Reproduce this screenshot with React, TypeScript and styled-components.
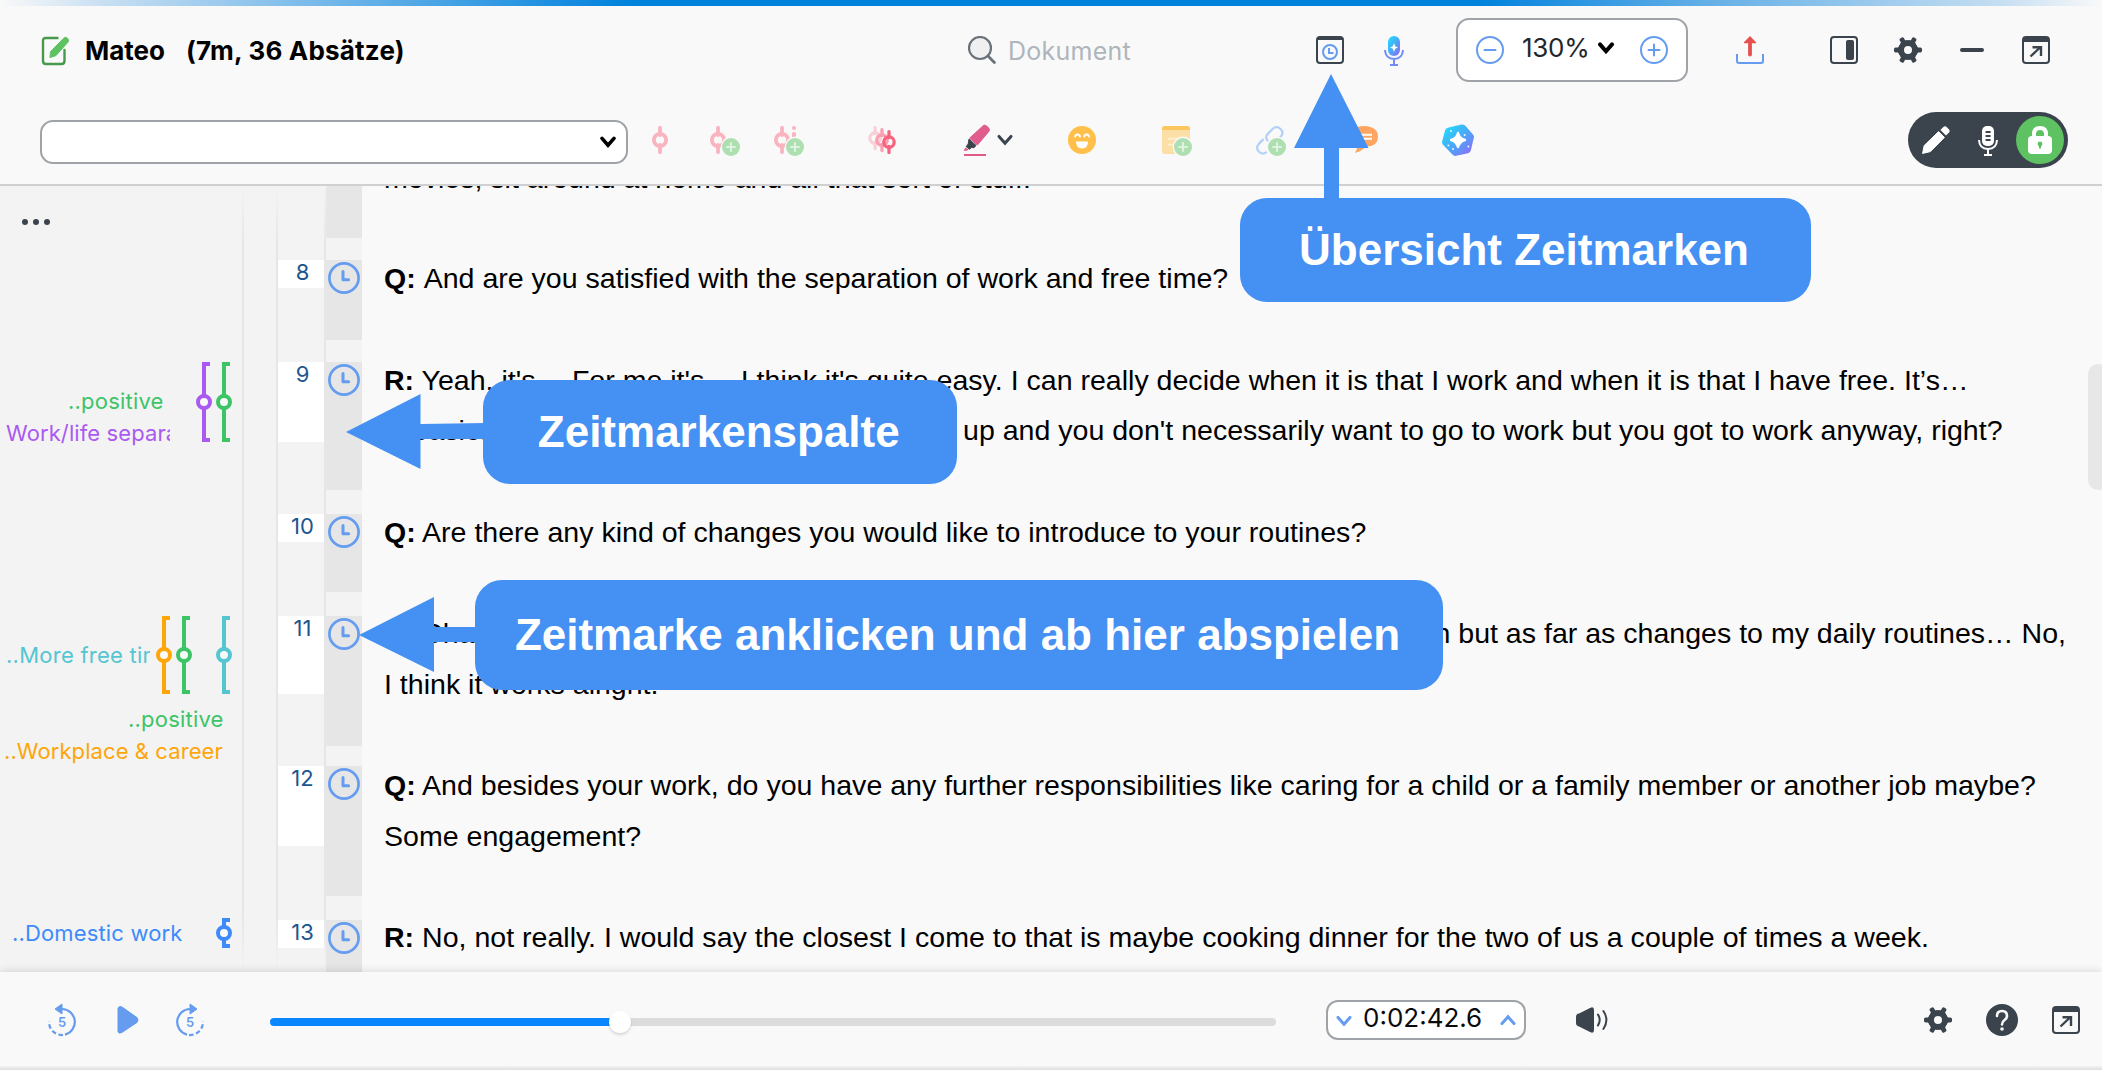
import React from 'react';
import styled, { createGlobalStyle } from 'styled-components';

const C = {
  bg: '#f9f9f9',
  side: '#f3f3f3',
  line: '#e6e6e6',
  dark: '#3b444d',
  blue: '#659cf0',
  callout: '#4490f3',
  green: '#5ec262',
};

const Global = createGlobalStyle`
  * { box-sizing: border-box; }
  body { margin: 0; background: ${C.bg}; }
`;

const UI = `Inter, "Liberation Sans", sans-serif`;
const DOC = `"Liberation Sans", Arial, sans-serif`;

const Window = styled.div`
  position: relative;
  width: 2102px;
  height: 1070px;
  overflow: hidden;
  display: flex;
  flex-direction: column;
  background: ${C.bg};
  font-family: ${UI};
`;

const AccentStrip = styled.div`
  height: 6px;
  flex: none;
  background: linear-gradient(90deg, #f9f9f9 0, #c5def2 110px, #0082dd 630px, #0082dd 1480px, #62aee6 1700px, #c5def2 2000px, #f9f9f9 2102px);
`;

const TitleBar = styled.header`
  height: 88px;
  flex: none;
  display: flex;
  align-items: center;
`;

const ToolBar = styled.div`
  height: 92px;
  flex: none;
  display: flex;
  align-items: center;
  padding-top: 2px;
  border-bottom: 2px solid #d0d0d0;
`;

const Slot = styled.span<{ $ml?: number; $pt?: number; $pb?: number }>`
  display: flex;
  flex: none;
  margin-left: ${(p) => p.$ml ?? 0}px;
  padding-top: ${(p) => p.$pt ?? 0}px;
  padding-bottom: ${(p) => p.$pb ?? 0}px;
`;

const Title = styled.h1<{ $ml: number; $ls: number }>`
  margin: 0 0 0 ${(p) => p.$ml}px;
  font-size: 26px;
  line-height: 30px;
  font-weight: 700;
  letter-spacing: ${(p) => p.$ls}px;
  color: #000;
  white-space: nowrap;
`;

const TitleGroup = styled.div`
  display: flex;
  align-items: center;
  width: 968px;
  padding: 2px 0 0 41px;
  flex: none;
`;

const SearchHint = styled.span`
  width: 308px;
  margin-left: 12px;
  padding-top: 2px;
  font-size: 25px;
  line-height: 30px;
  letter-spacing: 0.25px;
  color: #aeb5bb;
`;

const Field = styled.div<{ $w: number; $h: number; $ml: number; $r?: number; $mt?: number }>`
  width: ${(p) => p.$w}px;
  height: ${(p) => p.$h}px;
  margin-left: ${(p) => p.$ml}px;
  margin-top: ${(p) => p.$mt ?? 0}px;
  flex: none;
  display: flex;
  align-items: center;
  background: #fff;
  border: 2px solid #9fa3a8;
  border-radius: ${(p) => p.$r ?? 13}px;
`;

const FieldText = styled.span<{ $ml: number; $w: number; $color?: string; $ls?: number }>`
  width: ${(p) => p.$w}px;
  margin-left: ${(p) => p.$ml}px;
  padding-bottom: 4px;
  font-size: 26px;
  line-height: 30px;
  letter-spacing: ${(p) => p.$ls ?? 0}px;
  color: ${(p) => p.$color ?? '#22272c'};
  white-space: nowrap;
`;

const ModePill = styled.div`
  margin-left: 434px;
  width: 160px;
  height: 56px;
  border-radius: 28px;
  background: ${C.dark};
  display: flex;
  align-items: center;
  padding-left: 14px;
`;

const ModeActive = styled.span`
  margin-left: 18px;
  width: 48px;
  height: 48px;
  border-radius: 50%;
  background: ${C.green};
  display: flex;
  align-items: center;
  justify-content: center;
`;

const fade = `linear-gradient(to bottom, rgba(230,230,230,0), #e6e6e6 60px, #e6e6e6 calc(100% - 60px), rgba(230,230,230,0))`;

const Document = styled.main`
  flex: none;
  height: 786px;
  overflow: hidden;
  display: flex;
  flex-direction: column;
  background:
    ${fade} 242px 0 / 2px 100% no-repeat,
    ${fade} 276px 0 / 2px 100% no-repeat,
    ${fade} 324px 0 / 2px 100% no-repeat,
    linear-gradient(${C.side}, ${C.side}) 0 0 / 362px 100% no-repeat,
    ${C.bg};
`;

const Row = styled.section<{ $h: number }>`
  flex: none;
  height: ${(p) => p.$h}px;
  display: grid;
  grid-template-columns: 242px 36px 46px 38px 1fr;
  align-items: start;
`;

const CodeCell = styled.div`
  display: grid;
  height: 100%;
  align-items: start;
`;

const Lanes = styled.div<{ $mt: number }>`
  grid-area: 1 / 1;
  display: flex;
  justify-content: flex-end;
  padding-right: 8px;
  margin-top: ${(p) => p.$mt}px;
`;

const Labels = styled.div<{ $mt: number }>`
  grid-area: 1 / 1;
  margin-top: ${(p) => p.$mt}px;
  display: flex;
  flex-direction: column;
`;

const Label = styled.span<{ $x: number; $w: number; $c: string; $gap?: number; $ls?: number }>`
  margin: ${(p) => p.$gap ?? 0}px 0 0 ${(p) => p.$x}px;
  width: ${(p) => p.$w}px;
  overflow: hidden;
  white-space: nowrap;
  font-size: 22px;
  line-height: 32px;
  letter-spacing: ${(p) => p.$ls ?? 0.2}px;
  color: ${(p) => p.$c};
`;

const NumberCell = styled.div<{ $h: number }>`
  grid-column: 3;
  height: ${(p) => p.$h}px;
  background: ${(p) => (p.$h ? '#fff' : 'transparent')};
  padding: ${(p) => (p.$h ? 1 : 0)}px 0 0 3px;
  text-align: center;
  font-size: 22px;
  line-height: 22px;
  color: #1c568e;
`;

const TimeCell = styled.div<{ $h: number }>`
  grid-column: 4;
  height: ${(p) => p.$h}px;
  margin-left: 2px;
  background: ${C.line};
  display: flex;
  justify-content: center;
  padding-top: 2px;
`;

const Paragraph = styled.p<{ $mt: number }>`
  margin: ${(p) => p.$mt}px 0 0 22px;
  font-family: ${DOC};
  font-size: 28.55px;
  line-height: 50.5px;
  color: #000;
  white-space: nowrap;
`;

const Line = styled.span`
  display: flex;
  white-space: pre;
`;

const Lead = styled.span<{ $w: number }>`
  width: ${(p) => p.$w}px;
  flex: none;
`;

const Player = styled.footer`
  position: relative;
  flex: none;
  height: 98px;
  display: flex;
  align-items: center;
  padding-bottom: 2px;
  background: ${C.bg};
  box-shadow: 0 0 9px rgba(0, 0, 0, 0.16);
`;

const BottomEdge = styled.div`
  height: 4px;
  position: absolute;
  left: 0;
  right: 0;
  bottom: 0;
  background: linear-gradient(#f2f2f2, #dfdfdf);
`;

const Track = styled.div`
  margin: 4px 0 0 65px;
  width: 1006px;
  height: 8px;
  border-radius: 4px;
  background: #dcdcdc;
  display: flex;
  align-items: center;
`;

const Played = styled.div`
  width: 350px;
  height: 8px;
  border-radius: 4px 0 0 4px;
  background: #0a87ff;
`;

const Knob = styled.span`
  width: 22px;
  height: 22px;
  margin-left: -11px;
  border-radius: 50%;
  background: #fff;
  box-shadow: 0 2px 3px rgba(0, 0, 0, 0.14);
`;

const ScrollThumb = styled.div`
  position: absolute;
  right: -6px;
  top: 364px;
  width: 20px;
  height: 126px;
  border-radius: 10px;
  background: #e7e7e7;
`;

const Callout = styled.div<{ $x: number; $y: number; $w: number; $h: number }>`
  position: absolute;
  left: ${(p) => p.$x}px;
  top: ${(p) => p.$y}px;
  width: ${(p) => p.$w}px;
  height: ${(p) => p.$h}px;
  padding-right: 2px;
  border-radius: 27px;
  background: ${C.callout};
  color: #fff;
  display: flex;
  align-items: center;
  justify-content: center;
  font-family: ${DOC};
  font-weight: 700;
  font-size: 44px;
  line-height: 50px;
  white-space: nowrap;
`;

const Arrow = styled.svg<{ $x: number; $y: number }>`
  position: absolute;
  left: ${(p) => p.$x}px;
  top: ${(p) => p.$y}px;
  fill: ${C.callout};
`;

const Defs = styled.svg`
  position: absolute;
`;

type IconProps = { w?: number; h?: number; ml?: number; pt?: number; children: React.ReactNode };
const Icon = ({ w = 28, h = 28, ml, pt, children }: IconProps) => (
  <Slot $ml={ml} $pt={pt}>
    <svg width={w} height={h} viewBox={`0 0 ${w} ${h}`} fill="none">
      {children}
    </svg>
  </Slot>
);

const Gear = ({ ml }: { ml: number }) => (
  <Icon ml={ml}>
    {[0, 60, 120, 180, 240, 300].map((a) => (
      <path key={a} transform={`rotate(${a} 14 14)`} d="M21 7.6L24 11.6H26.4Q28 11.8 28 13V15Q28 16.2 26.4 16.4H24L21 20.4Z" fill={C.dark} />
    ))}
    <circle cx="14" cy="14" r="6.9" stroke={C.dark} strokeWidth="5.8" />
  </Icon>
);

const PopOut = ({ ml }: { ml: number }) => (
  <Icon ml={ml}>
    <rect x="1" y="1" width="26" height="26" rx="3" stroke={C.dark} strokeWidth="2" />
    <path d="M1 6V3a2 2 0 0 1 2-2h22a2 2 0 0 1 2 2v3z" fill={C.dark} />
    <path d="M8.5 20.5L18 11.5M10.5 11.2H19V20" stroke={C.dark} strokeWidth="2.4" />
  </Icon>
);

const Clock = () => (
  <svg width="32" height="32" viewBox="0 0 32 32" fill="none" stroke={C.blue}>
    <circle cx="16" cy="16" r="14.6" strokeWidth="2.7" />
    <path d="M15 9.5V17.7H20.6" strokeWidth="3" strokeLinecap="round" strokeLinejoin="round" />
  </svg>
);

const Plus = () => (
  <g>
    <circle cx="21" cy="21" r="10.4" fill={C.bg} />
    <circle cx="21" cy="21" r="9" fill="#aedfb1" />
    <path d="M21 16.3v9.4M16.3 21h9.4" stroke="#dff3e0" strokeWidth="2" />
  </g>
);

const CodeMark = ({ x = 8, y = 0, c = '#f9b4c0' }) => (
  <g transform={`translate(${x} ${y})`} stroke={c}>
    <path d="M0 1.8V9M0 19V26.2" strokeWidth="3.8" strokeLinecap="round" />
    <circle cx="0" cy="14" r="6.1" strokeWidth="3.8" />
  </g>
);

const Chevron = ({ ml, c = '#000', up = false, s = 3.4 }: { ml: number; c?: string; up?: boolean; s?: number }) => (
  <Icon w={18} h={12} ml={ml}>
    <path d={up ? 'M3 9.6L9 2.8L15 9.6' : 'M3 2.4L9 9.2L15 2.4'} stroke={c} strokeWidth={s} strokeLinecap="round" />
  </Icon>
);

const Bracket = ({ c, h }: { c: string; h: number }) => (
  <svg width="20" height={h} viewBox={`0 0 20 ${h}`} fill="none" stroke={c} strokeWidth="4">
    <path d={`M16 2H10V${h / 2 - 6}M10 ${h / 2 + 6}V${h - 2}H16`} />
    <circle cx="10" cy={h / 2} r="6" fill={C.bg} />
  </svg>
);

type LabelData = { t: string; x: number; w: number; c: string; gap?: number; ls?: number };
type RowData = {
  n?: number;
  h: number;
  num: number;
  time: number;
  mt: number;
  lines: { who?: string; text: string; lead?: number; leadText?: string }[];
  lanes?: (string | undefined)[];
  laneH?: number;
  laneMt?: number;
  labels?: LabelData[];
  labelMt?: number;
};

const PURPLE = '#aa5af0';
const GREEN = '#3dc466';
const ORANGE = '#fea50a';
const TEAL = '#55c5d1';
const BLUE = '#3d8bfa';

const rows: RowData[] = [
  { h: 74, num: 0, time: 52, mt: -33, lines: [{ text: 'movies, sit around at home and all that sort of stuff.' }] },
  { n: 8, h: 102, num: 28, time: 80, mt: -7, lines: [{ who: 'Q: ', text: 'And are you satisfied with the separation of work and free time?' }] },
  {
    n: 9, h: 152, num: 80, time: 128, mt: -7.5,
    lines: [
      { who: 'R:', text: " Yeah, it's… For me it's… I think it's quite easy. I can really decide when it is that I work and when it is that I have free. It’s…" },
      { lead: 579, leadText: 'is easier than when you have to get', text: "up and you don't necessarily want to go to work but you got to work anyway, right?" },
    ],
    lanes: [PURPLE, GREEN], laneH: 80, laneMt: 0,
    labels: [
      { t: '..positive', x: 68, w: 100, c: GREEN },
      { t: 'Work/life separation', x: 6, w: 164, c: PURPLE, ls: 0.1 },
    ],
    labelMt: 23,
  },
  { n: 10, h: 102, num: 28, time: 78, mt: -7, lines: [{ who: 'Q:', text: ' Are there any kind of changes you would like to introduce to your routines?' }] },
  {
    n: 11, h: 150, num: 78, time: 130, mt: -8,
    lines: [
      { lead: 960, who: 'R:', leadText: ' Changes… I could use a little more vacation', text: 'situation but as far as changes to my daily routines… No,' },
      { text: 'I think it works alright.' },
    ],
    lanes: [ORANGE, GREEN, undefined, TEAL], laneH: 78, laneMt: 0,
    labels: [
      { t: '..More free time', x: 6, w: 144, c: TEAL, ls: 0.25 },
      { t: '..positive', x: 128, w: 100, c: GREEN, gap: 32 },
      { t: '..Workplace & career', x: 4, w: 230, c: ORANGE, ls: 0.08 },
    ],
    labelMt: 23,
  },
  {
    n: 12, h: 154, num: 80, time: 130, mt: -6,
    lines: [
      { who: 'Q:', text: ' And besides your work, do you have any further responsibilities like caring for a child or a family member or another job maybe?' },
      { text: 'Some engagement?' },
    ],
  },
  {
    n: 13, h: 80, num: 28, time: 80, mt: -8,
    lines: [{ who: 'R:', text: ' No, not really. I would say the closest I come to that is maybe cooking dinner for the two of us a couple of times a week.' }],
    lanes: [BLUE], laneH: 30, laneMt: -2,
    labels: [{ t: '..Domestic work', x: 12, w: 190, c: BLUE, ls: 0.15 }],
    labelMt: -3,
  },
];

const MenuSlot = styled.span`
  display: flex;
  padding: 33px 0 0 22px;
`;

const ParagraphRow = ({ r }: { r: RowData }) => (
  <Row $h={r.h}>
    <CodeCell>
      {!r.n && (
        <MenuSlot>
          <svg width="28" height="6" fill={C.dark}>
            <circle cx="3" cy="3" r="3" /><circle cx="14" cy="3" r="3" /><circle cx="25" cy="3" r="3" />
          </svg>
        </MenuSlot>
      )}
      {r.lanes && (
        <Lanes $mt={r.laneMt ?? 0}>
          {r.lanes.map((c, i) => (c ? <Bracket key={i} c={c} h={r.laneH!} /> : <svg key={i} width="20" height="10" />))}
        </Lanes>
      )}
      {r.labels && (
        <Labels $mt={r.labelMt ?? 0}>
          {r.labels.map((l) => (
            <Label key={l.t} $x={l.x} $w={l.w} $c={l.c} $gap={l.gap} $ls={l.ls}>{l.t}</Label>
          ))}
        </Labels>
      )}
    </CodeCell>
    <NumberCell $h={r.num}>{r.n}</NumberCell>
    <TimeCell $h={r.time}>{r.n && <Clock />}</TimeCell>
    <Paragraph $mt={r.mt}>
      {r.lines.map((l, i) => (
        <Line key={i}>
          {l.lead ? (
            <Lead $w={l.lead}>{l.who && <b>{l.who}</b>}{l.leadText}</Lead>
          ) : (
            l.who && <b>{l.who}</b>
          )}
          {l.text}
        </Line>
      ))}
    </Paragraph>
  </Row>
);

const Skip = ({ ml, forward = false }: { ml: number; forward?: boolean }) => (
  <Icon w={30} h={34} ml={ml}>
    <g transform={forward ? 'translate(30 0) scale(-1 1)' : undefined}>
      <path d="M15 6A13 13 0 0 1 18 31.6" stroke={C.blue} strokeWidth="2.2" />
      <path d="M16 32A13 13 0 0 1 2 18.5" stroke={C.blue} strokeWidth="2.2" strokeDasharray="4.6 2.6" />
      <path d="M15 1V11L8 6Z" fill={C.blue} stroke={C.blue} strokeLinejoin="round" />
    </g>
    <text x="15" y="23.5" textAnchor="middle" fontFamily="Inter" fontWeight="600" fontSize="13" fill={C.blue}>5</text>
  </Icon>
);

export default function App() {
  return (
    <Window>
      <Global />
      <Defs width="0" height="0">
        <defs>
          <linearGradient id="ai" x1="0" y1="0" x2="1" y2="1">
            <stop offset="0.1" stopColor="#22d8fb" />
            <stop offset="0.55" stopColor="#4fa3f8" />
            <stop offset="1" stopColor="#9a63fb" />
          </linearGradient>
        </defs>
      </Defs>
      <AccentStrip />
      <TitleBar>
        <TitleGroup>
          <Icon w={29} h={30}>
            <path d="M16.5 2H5Q2 2 2 5V25Q2 28 5 28H20.5Q23.5 28 23.5 25V14" stroke="#47994e" strokeWidth="2.4" strokeLinecap="round" />
            <path d="M22.5 2.4Q24.3 0.4 26.4 2.2Q28.6 4.2 26.9 6.2L15 19.6L9 21.6L9.4 15.8Z" fill={C.green} stroke={C.green} strokeWidth="1" strokeLinejoin="round" />
          </Icon>
          <Title $ml={15} $ls={0}>Mateo</Title>
          <Title $ml={21} $ls={0.2}>(7m, 36 Absätze)</Title>
        </TitleGroup>
        <Icon>
          <circle cx="12" cy="12" r="11" fill="#f0f0f0" stroke="#69727b" strokeWidth="2.2" />
          <path d="M20 20L26.4 26.4" stroke="#69727b" strokeWidth="2.8" strokeLinecap="round" />
        </Icon>
        <SearchHint>Dokument</SearchHint>
        <Icon>
          <rect x="1" y="1" width="26" height="26" rx="3" stroke={C.dark} strokeWidth="2" />
          <path d="M1 4V3a2 2 0 0 1 2-2h22a2 2 0 0 1 2 2v1z" fill={C.dark} />
          <circle cx="14" cy="16" r="7" stroke={C.blue} strokeWidth="2" />
          <path d="M13 12V17H17.5" stroke={C.blue} strokeWidth="2" />
        </Icon>
        <Icon w={20} h={32} ml={40}>
          <rect x="4" y="2" width="12" height="20" rx="6" fill="url(#ai)" />
          <path d="M1 16Q1.6 25 10 25T19 16M10 25V31M6 31H14" stroke="#6f8cf8" strokeWidth="2" />
          <path d="M10 9L11.2 12.3L14 13.5L11.2 14.7L10 18L8.8 14.7L6 13.5L8.8 12.3Z" fill="#fff" />
        </Icon>
        <Field $w={232} $h={64} $ml={52}>
          <Icon ml={18}>
            <circle cx="14" cy="14" r="13" stroke={C.blue} strokeWidth="2" />
            <path d="M8.5 14H19.5" stroke={C.blue} strokeWidth="2" strokeLinecap="round" />
          </Icon>
          <FieldText $ml={18} $w={68} $ls={-0.3}>130%</FieldText>
          <Slot $ml={7} $pb={4}><Chevron ml={0} s={4} /></Slot>
          <Icon ml={25}>
            <circle cx="14" cy="14" r="13" stroke={C.blue} strokeWidth="2" />
            <path d="M8.5 14H19.5M14 8.5V19.5" stroke={C.blue} strokeWidth="2" strokeLinecap="round" />
          </Icon>
        </Field>
        <Icon ml={48}>
          <path d="M1 18V25Q1 27 3 27H25Q27 27 27 25V18" stroke={C.blue} strokeWidth="2" />
          <path d="M14 7V18.5" stroke="#e4524f" strokeWidth="3.8" strokeLinecap="round" />
          <path d="M14 0.8L19.6 6.6H8.4Z" fill="#e4524f" stroke="#e4524f" strokeWidth="1.2" strokeLinejoin="round" />
        </Icon>
        <Icon ml={66}>
          <rect x="1" y="1" width="26" height="26" rx="3" stroke={C.dark} strokeWidth="2" />
          <rect x="16" y="4" width="8" height="20" rx="2" fill={C.dark} />
        </Icon>
        <Gear ml={36} />
        <Icon w={24} h={4} ml={38}><rect width="24" height="4" rx="2" fill={C.dark} /></Icon>
        <PopOut ml={38} />
      </TitleBar>

      <ToolBar>
        <Field $w={588} $h={44} $ml={40} $mt={4}>
          <Chevron ml={557} s={3.6} />
        </Field>
        <Icon w={16} ml={24}><CodeMark /></Icon>
        <Icon w={30} h={30} ml={42} pt={2}><CodeMark /><Plus /></Icon>
        <Icon w={30} h={30} ml={34} pt={2}>
          <CodeMark />
          <path d="M20 2V2.1M20 8V12" stroke="#f9b4c0" strokeWidth="4" strokeLinecap="round" />
          <Plus />
        </Icon>
        <Icon ml={64}>
          <g transform="translate(0.2 0) scale(0.86)"><CodeMark x={8} c="#f9d0d8" /></g>
          <g transform="translate(7.1 2) scale(0.86)"><CodeMark x={8} c="#f99fb0" /></g>
          <g transform="translate(14.1 4) scale(0.86)"><CodeMark x={8} c="#f7647f" /></g>
        </Icon>
        <Icon w={28} h={32} ml={67}>
          <path d="M19.6 2.2Q21.4 0.2 23.4 1.9L25.4 3.6Q27.4 5.4 25.9 7.4L14.4 21L6.6 14.2Z" fill="#e05c8c" stroke="#e05c8c" strokeLinejoin="round" />
          <path d="M6 15L13 21.4L11.2 23.6H8.4L6.4 25.2L3.2 22.6L5.2 20Z" fill={C.dark} stroke={C.dark} strokeLinejoin="round" />
          <path d="M2.4 23.4L5.6 25.6L4 26.8H0.6Z" fill="#e05c8c" />
          <path d="M1 31H23" stroke="#e05c8c" strokeWidth="2" />
        </Icon>
        <Chevron ml={5} c={C.dark} s={3} />
        <Icon ml={54}>
          <circle cx="14" cy="14" r="14" fill="#fec04a" />
          <path d="M7.2 10.6Q7.6 8.6 9.6 8.6T12 10.6M16.2 10.6Q16.6 8.6 18.6 8.6T21 10.6" stroke="#fff" strokeWidth="2" strokeLinecap="round" />
          <path d="M8 15.6H20Q20 22.4 14 22.4T8 15.6Z" fill="#fff" />
        </Icon>
        <Icon w={30} h={30} ml={66} pt={2}>
          <rect width="28" height="28" rx="3" fill="#fbdfa6" />
          <path d="M0 4V3A3 3 0 0 1 3 0H25A3 3 0 0 1 28 3V4Z" fill="#f9c75e" />
          <path d="M6 12.8H22M6 18.8H14" stroke="#fdeecf" strokeWidth="2" />
          <Plus />
        </Icon>
        <Icon w={30} h={30} ml={64} pt={2}>
          <g stroke="#b2d0fa" strokeWidth="2.2" strokeLinecap="round">
            <path d="M11.5 14.5Q8.6 11 12 7.6L16.5 3Q20.6 -0.6 24.6 3Q28.4 7 24.4 11" />
            <path d="M7 13.6L3 17.6Q-0.8 22 3 25.8Q6.4 29 10 26.4" />
          </g>
          <Plus />
        </Icon>
        <Icon ml={64}>
          <path d="M14 0Q28 0.6 28 10.6Q28 20 17 20.6Q11 25.4 5 27Q7.6 23.4 7 19.6Q0 17 0 10.6Q0 0.6 14 0Z" fill="#fea561" />
          <path d="M7 8.8H22M7 12.8H22" stroke="#fff" strokeWidth="2" />
        </Icon>
        <Icon w={32} h={32} ml={64}>
          <path d="M6.6 3.4L19.4 0.6Q22 0 23.6 2L31 10.4Q32.4 12 31.8 14L28.8 26.4Q28.2 28.6 26 29.2L14.4 31.8Q12 32.4 10.4 30.6L1.2 21Q-0.4 19.4 0.2 17L3.2 6Q4 4 6.6 3.4Z" fill="url(#ai)" />
          <path d="M16 9Q17.4 14.6 23 16Q17.4 17.4 16 23Q14.6 17.4 9 16Q14.6 14.6 16 9Z" fill="#fff" stroke="#fff" strokeWidth="2.4" strokeLinejoin="round" />
          <g fill="#e8f7ff"><circle cx="9" cy="7" r="1" /><circle cx="22.6" cy="11" r="1" /><circle cx="6.4" cy="21.6" r="1" /><circle cx="11" cy="25" r="1" /><circle cx="26.4" cy="22.4" r="1" /></g>
        </Icon>
        <ModePill>
          <Icon>
            <path d="M16.6 5.6L22.4 11.4L8.4 25.6L0.6 27.4L2.2 19.6Z" fill="#fff" stroke="#fff" strokeLinejoin="round" />
            <path d="M18.4 4L21.4 1Q23 -0.4 24.6 1L27 3.4Q28.4 5 27 6.6L24 9.6Z" fill="#fff" />
          </Icon>
          <Icon w={20} h={32} ml={28}>
            <rect x="4" y="2" width="12" height="20" rx="5" fill="#fff" />
            <path d="M7.6 8H12.6M7.6 12H12.6M7.6 16H12.6" stroke={C.dark} strokeWidth="1.8" />
            <path d="M1 16Q1.4 25 10 25T19 16M10 25V31M6 31H14" stroke="#fff" strokeWidth="2" />
          </Icon>
          <ModeActive>
            <svg width="24" height="28" fill="none">
              <path d="M6 12V8Q6 2 12 2T18 8V12" stroke="#fff" strokeWidth="4" />
              <rect y="10" width="24" height="18" rx="4" fill="#fff" />
              <circle cx="12" cy="18" r="2.4" fill={C.green} /><path d="M12 18V22.4" stroke={C.green} strokeWidth="2" />
            </svg>
          </ModeActive>
        </ModePill>
      </ToolBar>

      <Document>
        {rows.map((r, i) => <ParagraphRow key={i} r={r} />)}
      </Document>

      <Player>
        <Skip ml={47} />
        <Icon w={24} h={30} ml={39}>
          <path d="M2 3L2 27Q3 29 6 27.4L21 17.4Q23 15 21 12.6L6 2Q3 0.4 2 3Z" fill={C.blue} stroke={C.blue} strokeLinejoin="round" />
        </Icon>
        <Skip ml={35} forward />
        <Track>
          <Played />
          <Knob />
        </Track>
        <Field $w={200} $h={40} $ml={50} $r={12}>
          <Slot $pt={2}><Chevron ml={7} c={C.blue} s={3} /></Slot>
          <FieldText $ml={10} $w={130} $color="#0a0a0a">0:02:42.6</FieldText>
          <Chevron ml={6} c={C.blue} up s={3} />
        </Field>
        <Icon w={34} h={28} ml={50}>
          <path d="M0 11Q0 8 3 7.6L14 2Q18 0 18 4V24Q18 28 14 26L3 20.4Q0 20 0 17Z" fill={C.dark} />
          <path d="M22 8.6Q25.4 14 22 19.4M27.4 5Q33.4 14 27.4 23" stroke={C.dark} strokeWidth="2" strokeLinecap="round" />
        </Icon>
        <Gear ml={314} />
        <Icon w={32} h={32} ml={34}>
          <circle cx="16" cy="16" r="16" fill={C.dark} />
          <path d="M11 12Q11 7 16 7T21 12Q21 14.4 18.6 16Q16 17.8 16 20.4" stroke={C.bg} strokeWidth="2.6" strokeLinecap="round" />
          <circle cx="16" cy="25" r="1.8" fill={C.bg} />
        </Icon>
        <PopOut ml={34} />
        <BottomEdge />
      </Player>

      <ScrollThumb />

      <Arrow $x={1294} $y={74} width="75" height="126" viewBox="0 0 75 126">
        <path d="M37 0L74.5 74H45V126H30V74H0Z" />
      </Arrow>
      <Callout $x={1239.5} $y={198} $w={571} $h={103.5}>Übersicht Zeitmarken</Callout>
      <Arrow $x={345.5} $y={394} width="140" height="75" viewBox="0 0 140 75">
        <path d="M0 38L74.5 0V30L140 29V45H74.5V75Z" />
      </Arrow>
      <Callout $x={482.5} $y={380} $w={474.5} $h={103.5}>Zeitmarkenspalte</Callout>
      <Arrow $x={359} $y={597} width="120" height="76" viewBox="0 0 120 76">
        <path d="M0 38L75 0V30H120V45H75V75Z" />
      </Arrow>
      <Callout $x={474.5} $y={580} $w={968} $h={109.5}>Zeitmarke anklicken und ab hier abspielen</Callout>
    </Window>
  );
}
